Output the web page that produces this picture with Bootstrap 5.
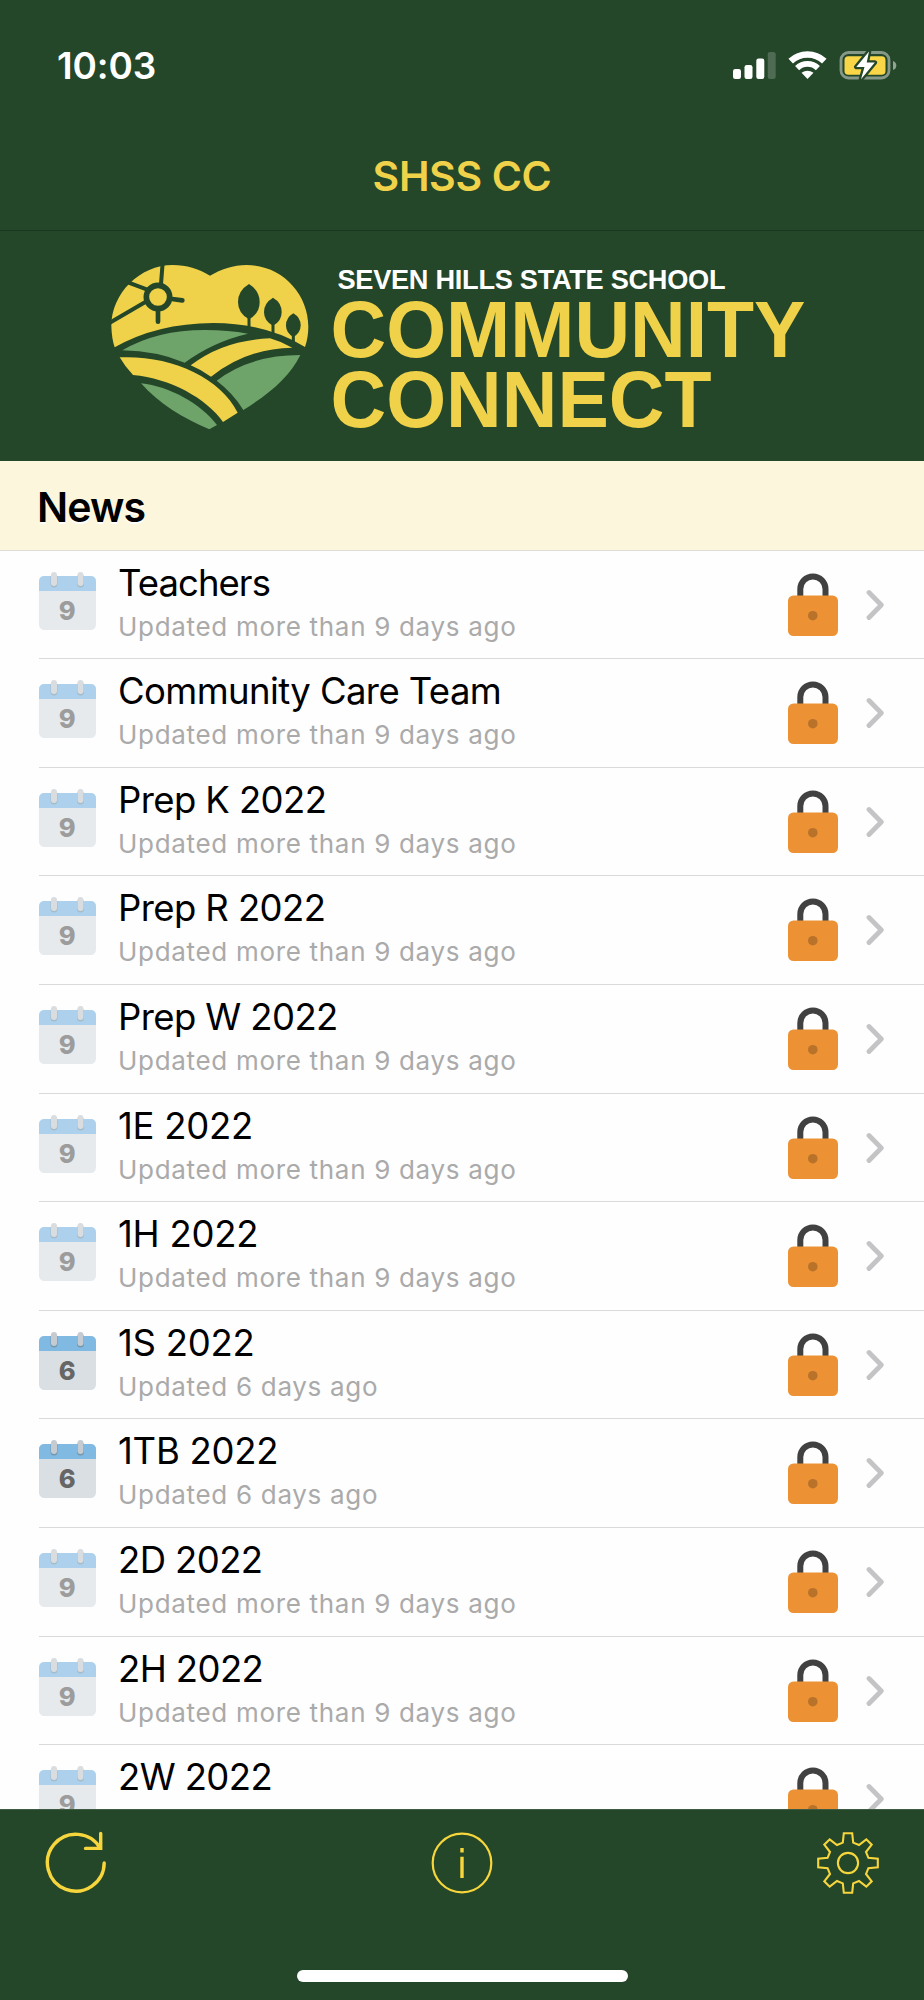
<!DOCTYPE html>
<html lang="en">
<head>
<meta charset="utf-8">
<meta name="viewport" content="width=device-width, initial-scale=1">
<title>SHSS CC</title>
<link href="https://cdn.jsdelivr.net/npm/bootstrap@5.3.0/dist/css/bootstrap.min.css" rel="stylesheet">
<style>
  body { font-family: Inter, "Liberation Sans", sans-serif; color: #000; background: #fefefe; }
  svg { display: block; flex: none; }
  .screen { height: 2000px; overflow: hidden; }
  .brand-bg { background: #244629; }
  .status-bar { height: 130px; padding: 44px 27px 0 57px; }
  .status-icons { margin-top: 5px; }
  .clock { font-size: 37px; line-height: 44px; font-weight: 600; letter-spacing: -.1px; }
  .title-bar { height: 101px; padding-top: 21px; border-bottom: 1.5px solid #1b3720; }
  .title-bar h1 { font-size: 41px; line-height: 50px; font-weight: 600; letter-spacing: -.35px; color: #efd249; }
  .section-head { height: 89.7px; padding: 4px 0 0 37px; background: #fcf6dc; border-bottom: 1.5px solid #dcdcd8; }
  .section-head h2 { font-size: 41px; line-height: 85px; font-weight: 600; letter-spacing: -.9px; text-shadow: 0 2px 1px #fff; }
  .news-list { height: 1258.3px; }
  .news-row { height: 108.6px; margin-left: 38.5px; border-bottom: 1.5px solid #dadadc; }
  .news-row .cal { margin-top: 20px; }
  .news-row .lock { margin-top: 22px; }
  .news-row .chev { margin: 38px 40px 0 27px; }
  .row-text { padding: 10px 0 0 21.5px; white-space: nowrap; }
  .row-title { font-size: 36.5px; line-height: 44px; letter-spacing: -.6px; }
  .row-title.loose { letter-spacing: -.25px; }
  .row-title.tight { letter-spacing: -.95px; }
  .row-sub { font-size: 26px; line-height: 34px; margin-top: 5px; letter-spacing: .69px; color: #aaa; }
  .old { opacity: .64; }
  .tool-bar { height: 191px; padding: 20px 43px 0; border-top: 1px solid #3f5a43; position: relative; }
  .home-bar { width: 331px; height: 12px; border-radius: 6px; background: #fff; position: absolute; bottom: 18px; left: 297px; }
</style>
</head>
<body>
<div class="screen d-flex flex-column">
  <header class="brand-bg">
    <div class="status-bar d-flex justify-content-between text-white">
      <div class="clock">10:03</div>
      <svg class="status-icons" width="165" height="32" viewBox="732.5 49 165 32">
        <g fill="#fff">
          <rect x="733.5" y="69" width="8" height="10" rx="2.3"/>
          <rect x="745" y="65" width="8" height="14" rx="2.3"/>
          <rect x="756.8" y="58.5" width="8" height="20.5" rx="2.3"/>
          <rect x="768.2" y="52" width="8" height="27" rx="2.3" opacity=".2"/>
          <path d="M808 79L802 72.8Q808 68.7 814 72.8Z"/>
        </g>
        <g fill="none" stroke="#fff">
          <path d="M791.2 61.2A24.6 24.6 0 0 1 824.8 61.2" stroke-width="6.6"/>
          <path d="M797.6 68.1A15 15 0 0 1 818.4 68.1" stroke-width="5.8"/>
        </g>
        <rect x="841.5" y="52.5" width="48" height="25.5" rx="7.5" fill="none" stroke="#fff" stroke-opacity=".45" stroke-width="2.8"/>
        <path d="M893.5 61Q896.8 62 896.8 65.5T893.5 70Z" fill="#fff" opacity=".5"/>
        <rect x="845" y="56.2" width="41" height="18.6" rx="3.8" fill="#f9d648"/>
        <path d="M869.5 51.5L856.8 67H865L861.5 79.2L875.3 62.5H867.2Z" fill="#fff" stroke="#244629" stroke-width="4.6" stroke-linejoin="round" paint-order="stroke"/>
      </svg>
    </div>
    <div class="title-bar text-center"><h1 class="m-0">SHSS CC</h1></div>
    <svg width="924" height="230" viewBox="0 231 924 230" role="img" aria-label="Seven Hills State School Community Connect">
      <g transform="translate(90 240) scale(.33333)">
        <path fill="#efd249" d="M360 107C325 86 290 75 248 75C150 75 64 160 64 258Q65 295 74 322Q200 250 370 249Q530 250 645 321Q655 292 655 260C655 160 575 75 470 75C430 75 393 88 360 107Z"/>
        <g fill="none" stroke="#244629" stroke-width="12">
          <circle cx="204" cy="171" r="35" stroke-width="17"/>
          <path d="M213 132L218 68M172 149L116 128M166 186L58 249"/>
          <path d="M246 177L277 181M204 212V245" stroke-width="14" stroke-linecap="round"/>
          <path d="M477 230V264M549 250V281M610 285V306" stroke-width="9"/>
        </g>
        <g fill="#244629">
          <path d="M477 132Q509 152 509 186T477 238Q444 220 444 186T477 132Z"/>
          <path d="M549 173Q575 188 575 216T549 257Q522 243 522 216T549 173Z"/>
          <path d="M610 220Q632 233 632 256T610 291Q588 279 588 256T610 220Z"/>
        </g>
        <g fill="#6ea36a">
          <path d="M97 331Q200 270 345 270Q415 270 474 281Q370 305 284 368Q200 333 97 331Z"/>
          <path d="M380 422Q480 345 631 345C600 410 540 460 460 510Q430 460 380 422Z"/>
          <path d="M153 430C240 440 330 490 381 555L358 568C280 535 205 490 153 430Z"/>
        </g>
        <g fill="#efd249">
          <path d="M302 376Q400 300 540 295Q575 305 607 323Q470 325 363 410Q335 390 302 376Z"/>
          <path d="M89 352C240 345 390 410 443 518L399 546C350 475 240 415 129 405Q105 380 89 352Z"/>
        </g>
      </g>
      <g font-family="Liberation Sans, Arial, sans-serif" font-weight="700">
        <text x="337.5" y="289" font-size="27.2" fill="#fff" textLength="388">SEVEN HILLS STATE SCHOOL</text>
        <g font-size="80.5" fill="#efd249">
          <text x="330.5" y="356.7" textLength="475" lengthAdjust="spacingAndGlyphs">COMMUNITY</text>
          <text x="330.5" y="426.7" textLength="381" lengthAdjust="spacingAndGlyphs">CONNECT</text>
        </g>
      </g>
    </svg>
  </header>

  <div class="section-head"><h2 class="m-0">News</h2></div>
  <main class="news-list overflow-hidden" id="news"></main>

  <footer class="tool-bar brand-bg d-flex justify-content-between align-items-start">
    <svg width="66" height="66" viewBox="43 1830 66 66" fill="none" stroke="#f6d63c" stroke-width="3.4" stroke-linecap="round">
      <path d="M104.2 1863A28.4 28.4 0 1 1 100.3 1848.3M100.7 1833.5V1848.4H85.5"/>
    </svg>
    <svg width="66" height="66" viewBox="429 1830 66 66" fill="none" stroke="#f6d63c" stroke-width="2.2">
      <circle cx="462" cy="1863" r="29.3"/>
      <path d="M462 1848V1852.4M462 1856.7V1878" stroke-width="3.4"/>
    </svg>
    <svg width="66" height="66" viewBox="-33 -33 66 66" fill="none" stroke="#f6d63c" stroke-width="2.1">
      <path d="M-4.2-29.8H4.2L5.2-20.4L11-18L18.3-23.7L23.7-18.3L18-11L20.4-5.2L29.8-4.2V4.2L20.4 5.2L18 11L23.7 18.3L18.3 23.7L11 18L5.2 20.4L4.2 29.8H-4.2L-5.2 20.4L-11 18L-18.3 23.7L-23.7 18.3L-18 11L-20.4 5.2L-29.8 4.2V-4.2L-20.4-5.2L-18-11L-23.7-18.3L-18.3-23.7L-11-18L-5.2-20.4Z"/>
      <circle r="10.1"/>
    </svg>
    <div class="home-bar"></div>
  </footer>
</div>

<script src="https://cdn.jsdelivr.net/npm/bootstrap@5.3.0/dist/js/bootstrap.bundle.min.js"></script>
<script>
  const groups = [
    ["Teachers", 9, "tight"], ["Community Care Team", 9], ["Prep K 2022", 9], ["Prep R 2022", 9],
    ["Prep W 2022", 9], ["1E 2022", 9, "loose"], ["1H 2022", 9, "loose"], ["1S 2022", 6, "loose"],
    ["1TB 2022", 6, "loose"], ["2D 2022", 9], ["2H 2022", 9], ["2W 2022", 9]
  ];
  document.getElementById("news").innerHTML = groups.map(([name, days, fit = ""], i) => `
    <div class="news-row d-flex align-items-start">
      <svg class="cal ${days === 9 ? "old" : ""}" width="58" height="60" viewBox="0 0 58 60">
        <rect y="5" width="57" height="54" rx="5.500" fill="#d9dfe3"/>
        <path d="M0 20V10.500Q0 5 5.500 5H51.500Q57 5 57 10.500V20Z" fill="#80b9e2"/>
        <g fill="#7397ae"><rect x="11.500" y="3" width="7" height="13.500" rx="3.500"/><rect x="38" y="3" width="7" height="13.500" rx="3.500"/></g>
        <g fill="#c5cbd0"><rect x="12" y="1" width="6" height="14" rx="3"/><rect x="38.500" y="1" width="6" height="14" rx="3"/></g>
        <text x="28.200" y="48.500" text-anchor="middle" font-size="25.500" font-weight="800" fill="#666">${days}</text>
      </svg>
      <div class="row-text flex-grow-1">
        <div class="row-title ${fit}">${name}</div>
        ${i < groups.length - 1 ? `<div class="row-sub">Updated ${days === 9 ? "more than " : ""}${days} days ago</div>` : ""}
      </div>
      <svg class="lock" width="50" height="64" viewBox="0 0 50 64">
        <path d="M12.300 24V16A12.600 12.600 0 0 1 37.500 16V24" fill="none" stroke="#414141" stroke-width="6"/>
        <rect y="22.500" width="50" height="40.500" rx="5.500" fill="#ec9235"/>
        <circle cx="24.800" cy="42.700" r="4.800" fill="#b9722a"/>
      </svg>
      <svg class="chev" width="19" height="32" viewBox="0 0 19 32" fill="none" stroke="#c4c4c6" stroke-width="4.800" stroke-linecap="round" stroke-linejoin="round">
        <path d="M4 3.500L16.300 16L4 28.500"/>
      </svg>
    </div>`).join("");
</script>
</body>
</html>
